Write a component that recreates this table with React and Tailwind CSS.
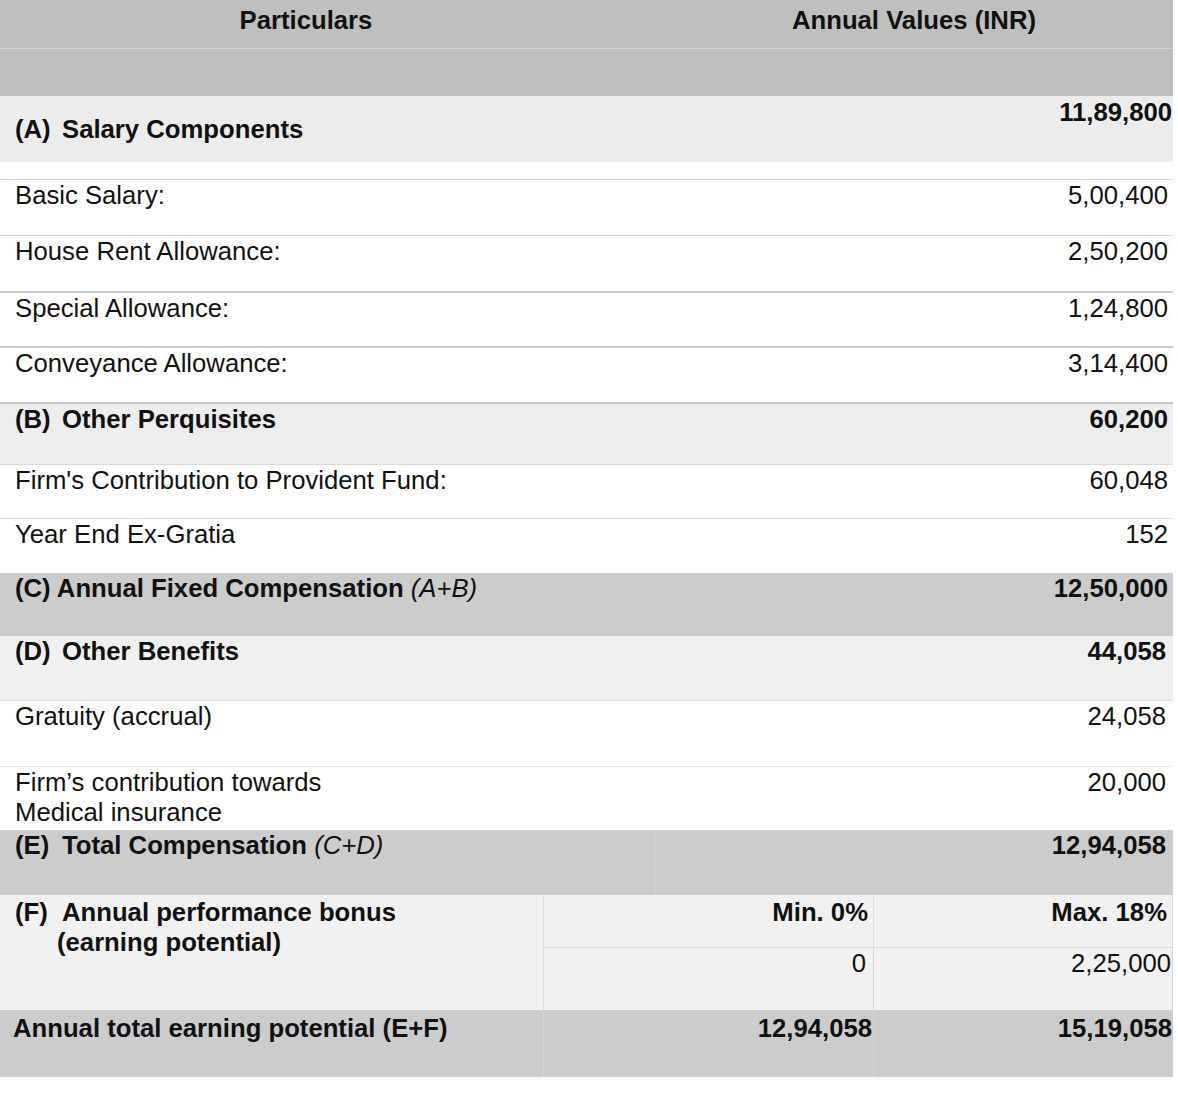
export default function App() {
  const font = { fontFamily: '"Liberation Sans", Arial, sans-serif' };
  const Pre = ({ children }) => (
    <span className="inline-block w-[47px]">{children}</span>
  );
  return (
    <div
      className="w-[1178px] h-[1115px] bg-white text-[#111] text-[25.7px] leading-[30px]"
      style={font}
    >
      <div className="w-[1173px] flex flex-col">
        {/* Header */}
        <div className="h-[48px] bg-[#bfbfbf] flex font-bold pt-[5px]">
          <div className="w-[612px] text-center">Particulars</div>
          <div className="w-[43px]" />
          <div className="w-[518px] text-center">Annual Values (INR)</div>
        </div>
        <div className="h-px bg-[#d3d3d3]" />
        <div className="h-[47px] bg-[#bfbfbf]" />

        {/* (A) */}
        <div className="h-[66px] bg-[#ececec] flex justify-between font-bold pl-[15px] pr-px">
          <div className="self-center">
            <Pre>(A)</Pre>Salary Components
          </div>
          <div className="pt-px">11,89,800</div>
        </div>
        <div className="h-[17px] bg-white" />

        <div className="h-[56px] border-t border-[#d9d9d9] flex justify-between pl-[15px] pr-[5px]">
          <div>Basic Salary:</div>
          <div>5,00,400</div>
        </div>
        <div className="h-[56px] border-t border-[#d9d9d9] flex justify-between pl-[15px] pr-[5px]">
          <div>House Rent Allowance:</div>
          <div>2,50,200</div>
        </div>
        <div className="h-[55px] border-t-2 border-[#cacaca] flex justify-between pl-[15px] pr-[5px]">
          <div>Special Allowance:</div>
          <div>1,24,800</div>
        </div>
        <div className="h-[56px] border-t-2 border-[#cacaca] flex justify-between pl-[15px] pr-[5px]">
          <div>Conveyance Allowance:</div>
          <div>3,14,400</div>
        </div>

        {/* (B) */}
        <div className="h-[62px] border-t-2 border-[#c6c6c6] bg-[#ededed] flex justify-between font-bold pl-[15px] pr-[5px]">
          <div>
            <Pre>(B)</Pre>Other Perquisites
          </div>
          <div>60,200</div>
        </div>
        <div className="h-[54px] border-t border-[#dadada] flex justify-between pl-[15px] pr-[5px]">
          <div>Firm's Contribution to Provident Fund:</div>
          <div>60,048</div>
        </div>
        <div className="h-[55px] border-t border-[#e0e0e0] flex justify-between pl-[15px] pr-[5px]">
          <div>Year End Ex-Gratia</div>
          <div>152</div>
        </div>

        {/* (C) */}
        <div className="h-[63px] bg-[#cdcccd] flex justify-between font-bold pl-[15px] pr-[5px]">
          <div>
            (C) Annual Fixed Compensation{" "}
            <span className="italic font-normal">(A+B)</span>
          </div>
          <div>12,50,000</div>
        </div>

        {/* (D) */}
        <div className="h-[64px] bg-[#f0f0f0] flex justify-between font-bold pl-[15px] pr-[7px]">
          <div>
            <Pre>(D)</Pre>Other Benefits
          </div>
          <div>44,058</div>
        </div>
        <div className="h-[66px] border-t border-[#dedede] flex justify-between pl-[15px] pr-[7px]">
          <div>Gratuity (accrual)</div>
          <div>24,058</div>
        </div>
        <div className="h-[64px] border-t border-[#e3e3e3] flex justify-between pl-[15px] pr-[7px]">
          <div>
            <div>Firm’s contribution towards</div>
            <div>Medical insurance</div>
          </div>
          <div>20,000</div>
        </div>

        {/* (E) */}
        <div className="h-[65px] bg-[#cdcccd] flex font-bold">
          <div className="w-[655px] pl-[15px]">
            <Pre>(E)</Pre>Total Compensation{" "}
            <span className="italic font-normal">(C+D)</span>
          </div>
          <div className="flex-1 border-l border-[#d2d1d2] text-right pr-[7px]">
            12,94,058
          </div>
        </div>

        {/* (F) */}
        <div className="h-[115px] flex">
          <div className="w-[543px] bg-[#f1f1f1] font-bold pl-[15px] pt-[2px]">
            <div>
              <Pre>(F)</Pre>Annual performance bonus
            </div>
            <div className="pl-[42px]">(earning potential)</div>
          </div>
          <div className="flex-1 grid grid-cols-[330px_1fr] grid-rows-[52px_63px] bg-[#f1f1f1] border-l border-[#dcdcdc]">
            <div className="font-bold text-right pr-[5px] pt-[2px] border-r border-[#dcdcdc]">
              Min. 0%
            </div>
            <div className="font-bold text-right pr-[5px] pt-[2px] border-r border-[#dcdcdc]">
              Max. 18%
            </div>
            <div className="text-right pr-[7px] border-t border-r border-[#d6d6d6]">
              0
            </div>
            <div className="text-right pr-px border-t border-r border-[#d6d6d6]">
              2,25,000
            </div>
          </div>
        </div>

        {/* Annual total */}
        <div className="h-[67px] flex font-bold bg-[#cdcccd]">
          <div className="w-[543px] pl-[13px] pt-[3px]">
            Annual total earning potential (E+F)
          </div>
          <div className="w-[330px] border-l border-[#d4d4d4] text-right pr-px pt-[3px]">
            12,94,058
          </div>
          <div className="flex-1 border-l border-[#d4d4d4] text-right pr-px pt-[3px]">
            15,19,058
          </div>
        </div>
      </div>
    </div>
  );
}
